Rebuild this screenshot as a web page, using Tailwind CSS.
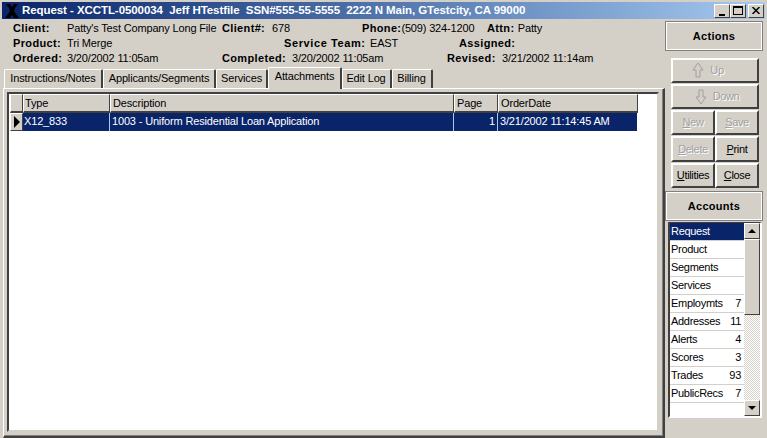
<!DOCTYPE html>
<html lang="en">
<head>
  <meta charset="UTF-8">
  <title>Request</title>
  <script src="https://cdn.jsdelivr.net/npm/@tailwindcss/browser@4"></script>
</head>
<body class="w-[767px] h-[438px] overflow-hidden bg-[#d4d0c8] text-black text-[11px] leading-[15px] font-['Liberation_Sans',sans-serif]">
  <div class="h-[438px] flex flex-col pt-[2px] pl-[2px] pr-[2px]">
    <!-- title bar -->
    <div class="h-[17px] shrink-0 flex items-center pl-[3px] pr-[1px] bg-gradient-to-r from-[#0a246a] to-[#a6caf0] text-white font-bold text-[11.5px]">
      <svg width="14" height="14" viewBox="0 0 14 14" class="shrink-0"><path d="M1 0 L5 0 L7 3 L9 0 L13 0 L10 4 L9 7 L11 10 L14 14 L9 14 L7 11 L5 14 L0 14 L3 10 L5 7 L4 4 Z" fill="#000"/></svg>
      <span class="ml-[3px] whitespace-pre tracking-[-0.07px]">Request - XCCTL-0500034  Jeff HTestfile  SSN#555-55-5555  2222 N Main, GTestcity, CA 99000</span>
      <div class="ml-auto flex">
        <div class="w-[16px] h-[14px] bg-[#d4d0c8] border border-t-white border-l-white border-r-[#404040] border-b-[#404040] text-black flex items-end justify-center pb-[1px]"><div class="w-[6px] h-[2px] bg-black"></div></div>
        <div class="w-[16px] h-[14px] bg-[#d4d0c8] border border-t-white border-l-white border-r-[#404040] border-b-[#404040] flex items-center justify-center"><div class="w-[10px] h-[9px] border border-t-2 border-black"></div></div>
        <div class="ml-[2px] w-[16px] h-[14px] bg-[#d4d0c8] border border-t-white border-l-white border-r-[#404040] border-b-[#404040] flex items-center justify-center"><svg width="8" height="7" viewBox="0 0 8 7"><path d="M0.5 0 L7.5 7 M7.5 0 L0.5 7" stroke="#000" stroke-width="1.5"/></svg></div>
      </div>
    </div>

    <div class="flex flex-1 min-h-0">
      <!-- main column -->
      <div class="w-[663px] shrink-0 flex flex-col">
        <div class="pl-[11px] pt-[2px] h-[47px] flex flex-col tracking-[-0.16px]">
          <div class="flex h-[15px] whitespace-pre">
            <span class="w-[54px] font-bold tracking-[0.35px]">Client:</span><span class="w-[155px]">Patty's Test Company Long File</span><span class="w-[50px] font-bold tracking-[0.35px]">Client#:</span><span class="w-[90px]">678</span><span class="w-[125px]"><b class="tracking-[0.35px]">Phone:</b>(509) 324-1200</span><span class="font-bold tracking-[0.35px]">Attn: </span><span>Patty</span>
          </div>
          <div class="flex h-[15px] whitespace-pre">
            <span class="w-[54px] font-bold tracking-[0.35px]">Product:</span><span class="w-[217px]">Tri Merge</span><span class="w-[86px] font-bold tracking-[0.6px]">Service Team:</span><span class="w-[89px]">EAST</span><span class="font-bold tracking-[0.35px]">Assigned:</span>
          </div>
          <div class="flex h-[15px] whitespace-pre">
            <span class="w-[54px] font-bold tracking-[0.35px]">Ordered:</span><span class="w-[155px]">3/20/2002 11:05am</span><span class="w-[70px] font-bold tracking-[0.35px]">Completed:</span><span class="w-[155px]">3/20/2002 11:05am</span><span class="w-[55px] font-bold tracking-[0.35px]">Revised:</span><span>3/21/2002 11:14am</span>
          </div>
        </div>

        <!-- tabs -->
        <div class="h-[22px] flex items-end pl-[2px] shrink-0 tracking-[-0.15px]">
          <div class="w-[99px] h-[19px] pb-[1px] flex items-center justify-center bg-[#d4d0c8] border-t border-l border-white border-r-2 border-r-[#404040] rounded-t-[2px]">Instructions/Notes</div>
          <div class="w-[113px] h-[19px] pb-[1px] flex items-center justify-center bg-[#d4d0c8] border-t border-l border-white border-r-2 border-r-[#404040] rounded-t-[2px]">Applicants/Segments</div>
          <div class="w-[52px] h-[19px] pb-[1px] flex items-center justify-center bg-[#d4d0c8] border-t border-l border-white border-r-2 border-r-[#404040] rounded-t-[2px]">Services</div>
          <div class="w-[74px] h-[22px] -mb-[1px] z-10 pb-[4px] flex items-center justify-center bg-[#d4d0c8] border-t border-l border-white border-r-2 border-r-[#404040] rounded-t-[2px]">Attachments</div>
          <div class="w-[50px] h-[19px] pb-[1px] pr-[1px] flex items-center justify-center bg-[#d4d0c8] border-t border-l border-white border-r-2 border-r-[#404040] rounded-t-[2px]">Edit Log</div>
          <div class="w-[41px] h-[19px] pb-[1px] pr-[1px] flex items-center justify-center bg-[#d4d0c8] border-t border-l border-white border-r-2 border-r-[#404040] rounded-t-[2px]">Billing</div>
        </div>

        <!-- tab page -->
        <div class="flex-1 min-h-0 ml-[1px] border-t border-l border-white border-r-2 border-r-[#404040] border-b-2 border-b-[#404040]">
          <div class="h-full border-r border-b border-[#808080] p-[3px]">
            <div class="h-full bg-white pl-[1px] border-2 border-t-[#404040] border-l-[#404040] border-r-[#d4d0c8] border-b-[#d4d0c8] flex flex-col tracking-[-0.16px]">
              <div class="flex h-[19px] shrink-0">
                <div class="w-[13px] bg-[#d4d0c8] border border-t-white border-l-white border-r-[#404040] border-b-[#404040] border-b-2"></div>
                <div class="w-[87px] pl-[1px] pt-[1px] bg-[#d4d0c8] border border-t-white border-l-white border-r-[#404040] border-b-[#404040] border-b-2">Type</div>
                <div class="w-[344px] pl-[2px] pt-[1px] bg-[#d4d0c8] border border-t-white border-l-white border-r-[#404040] border-b-[#404040] border-b-2">Description</div>
                <div class="w-[44px] pl-[2px] pt-[1px] bg-[#d4d0c8] border border-t-white border-l-white border-r-[#404040] border-b-[#404040] border-b-2">Page</div>
                <div class="w-[140px] pl-[2px] pt-[1px] bg-[#d4d0c8] border border-t-white border-l-white border-r-[#404040] border-b-[#404040] border-b-2">OrderDate</div>
              </div>
              <div class="flex h-[18px] shrink-0 text-white leading-[17px]">
                <div class="w-[13px] bg-[#d4d0c8] border border-t-white border-l-white border-r-[#404040] border-b-[#404040] flex items-center justify-center"><div class="w-0 h-0 border-y-[6px] border-y-transparent border-l-[6px] border-l-black"></div></div>
                <div class="w-[87px] pl-[1px] bg-[#0a246a] border-r border-[#a6caf0]">X12_833</div>
                <div class="w-[344px] pl-[2px] bg-[#0a246a] border-r border-[#a6caf0]">1003 - Uniform Residential Loan Application</div>
                <div class="w-[44px] pr-[2px] text-right bg-[#0a246a] border-r border-[#a6caf0]">1</div>
                <div class="w-[139px] pl-[2px] bg-[#0a246a]">3/21/2002 11:14:45 AM</div>
              </div>
            </div>
          </div>
        </div>
      </div>

      <!-- right column -->
      <div class="flex-1 flex flex-col pt-[2px] pr-[2px]">
        <div class="h-[30px] shrink-0 pt-[1px] flex items-center justify-center font-bold tracking-[0.3px] border-2 border-white outline outline-[#808080] -outline-offset-1">Actions</div>
        <div class="flex flex-col pl-[6px] pr-[4px] pt-[7px] gap-[1px] tracking-[-0.35px]">
          <div class="h-[25px] pr-[14px] pb-[1px] flex items-center justify-center gap-[6px] text-[#a0a0a0] [text-shadow:1px_1px_0_#fff] border-2 border-t-white border-l-white border-r-[#404040] border-b-[#404040]">
            <svg width="12" height="16" viewBox="0 0 12 16"><path d="M6 1 L11 8 L8 8 L8 15 L4 15 L4 8 L1 8 Z" fill="none" stroke="#a0a0a0"/></svg>Up
          </div>
          <div class="h-[25px] pl-[4px] flex items-center justify-center gap-[6px] text-[#a0a0a0] [text-shadow:1px_1px_0_#fff] border-2 border-t-white border-l-white border-r-[#404040] border-b-[#404040]">
            <svg width="12" height="16" viewBox="0 0 12 16"><path d="M6 15 L11 8 L8 8 L8 1 L4 1 L4 8 L1 8 Z" fill="none" stroke="#a0a0a0"/></svg>Down
          </div>
          <div class="flex h-[25px]">
            <div class="w-[44px] flex items-center justify-center text-[#a0a0a0] [text-shadow:1px_1px_0_#fff] border-2 border-t-white border-l-white border-r-[#404040] border-b-[#404040]"><span><u>N</u>ew</span></div>
            <div class="flex-1 flex items-center justify-center text-[#a0a0a0] [text-shadow:1px_1px_0_#fff] border-2 border-t-white border-l-white border-r-[#404040] border-b-[#404040]"><span><u>S</u>ave</span></div>
          </div>
          <div class="flex h-[26px]">
            <div class="w-[44px] flex items-center justify-center text-[#a0a0a0] [text-shadow:1px_1px_0_#fff] border-2 border-t-white border-l-white border-r-[#404040] border-b-[#404040]"><span><u>D</u>elete</span></div>
            <div class="flex-1 flex items-center justify-center border-2 border-t-white border-l-white border-r-[#404040] border-b-[#404040]"><span><u>P</u>rint</span></div>
          </div>
          <div class="flex h-[25px]">
            <div class="w-[44px] flex items-center justify-center border-2 border-t-white border-l-white border-r-[#404040] border-b-[#404040]"><span><u>U</u>tilities</span></div>
            <div class="flex-1 flex items-center justify-center border-2 border-t-white border-l-white border-r-[#404040] border-b-[#404040]"><span><u>C</u>lose</span></div>
          </div>
        </div>
        <div class="mt-[3px] h-[30px] shrink-0 flex items-center justify-center font-bold tracking-[0.3px] border-2 border-white outline outline-[#808080] -outline-offset-1">Accounts</div>
        <div class="mt-[1px] ml-[3px] mr-[1px] h-[196px] flex bg-white border-2 border-t-1 border-t-[#404040] border-l-[#404040] border-r-white border-b-white">
          <div class="flex-1 leading-[17px] tracking-[-0.3px]">
            <div class="h-[18px] pl-[1px] pr-[3px] flex justify-between border-b border-[#d4d0c8] bg-[#0a246a] text-white"><span>Request</span></div>
            <div class="h-[18px] pl-[1px] pr-[3px] flex justify-between border-b border-[#d4d0c8]"><span>Product</span></div>
            <div class="h-[18px] pl-[1px] pr-[3px] flex justify-between border-b border-[#d4d0c8]"><span>Segments</span></div>
            <div class="h-[18px] pl-[1px] pr-[3px] flex justify-between border-b border-[#d4d0c8]"><span>Services</span></div>
            <div class="h-[18px] pl-[1px] pr-[3px] flex justify-between border-b border-[#d4d0c8]"><span>Employmts</span><span>7</span></div>
            <div class="h-[18px] pl-[1px] pr-[3px] flex justify-between border-b border-[#d4d0c8]"><span>Addresses</span><span>11</span></div>
            <div class="h-[18px] pl-[1px] pr-[3px] flex justify-between border-b border-[#d4d0c8]"><span>Alerts</span><span>4</span></div>
            <div class="h-[18px] pl-[1px] pr-[3px] flex justify-between border-b border-[#d4d0c8]"><span>Scores</span><span>3</span></div>
            <div class="h-[18px] pl-[1px] pr-[3px] flex justify-between border-b border-[#d4d0c8]"><span>Trades</span><span>93</span></div>
            <div class="h-[18px] pl-[1px] pr-[3px] flex justify-between border-b border-[#d4d0c8]"><span>PublicRecs</span><span>7</span></div>
          </div>
          <div class="w-[16px] shrink-0 flex flex-col bg-[#e8e6e2] bg-[repeating-conic-gradient(#d4d0c8_0_25%,#fff_0_50%)] bg-[length:2px_2px]">
            <div class="h-[16px] bg-[#d4d0c8] border border-t-white border-l-white border-r-[#404040] border-b-[#404040] flex items-center justify-center"><div class="w-0 h-0 border-x-[4px] border-x-transparent border-b-[4px] border-b-black"></div></div>
            <div class="h-[76px] bg-[#d4d0c8] border border-t-white border-l-white border-r-[#404040] border-b-[#404040]"></div>
            <div class="mt-auto h-[16px] bg-[#d4d0c8] border border-t-white border-l-white border-r-[#404040] border-b-[#404040] flex items-center justify-center"><div class="w-0 h-0 border-x-[4px] border-x-transparent border-t-[4px] border-t-black"></div></div>
          </div>
        </div>
      </div>
    </div>
  </div>
</body>
</html>
